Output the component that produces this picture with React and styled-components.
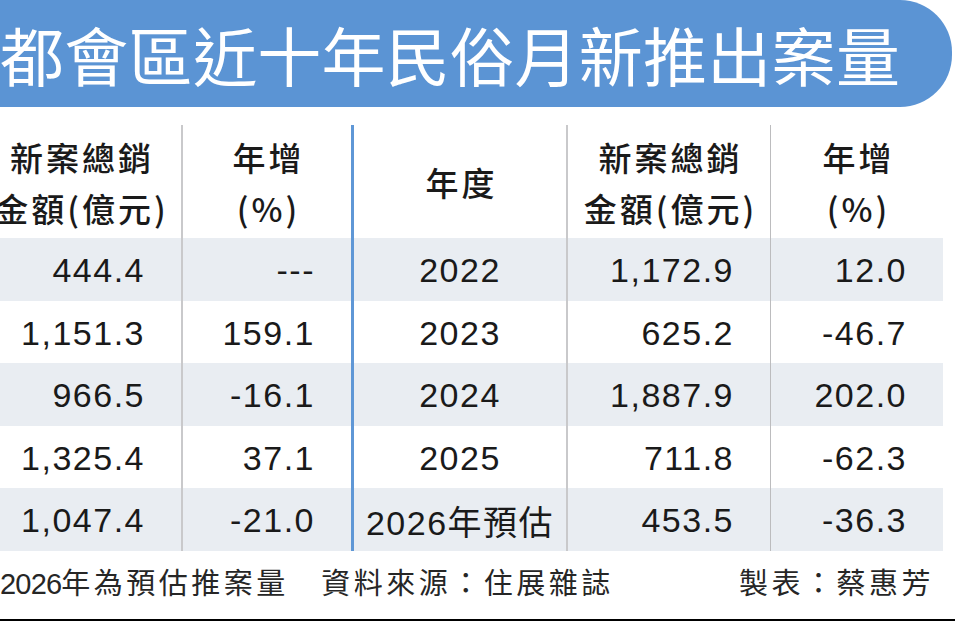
import React from "react";
import styled, { createGlobalStyle } from "styled-components";

const Global = createGlobalStyle`
  html, body { margin: 0; padding: 0; background: #fff; }
  body { font-family: "Liberation Sans", "Noto Sans CJK TC", sans-serif; color: #1f1f1f; }
`;

const Page = styled.div`
  width: 955px;
  height: 621px;
  overflow: hidden;
  display: flex;
  flex-direction: column;
  background: #fff;
`;

const TitleBar = styled.h1`
  margin: 0 3px 0 0;
  height: 107px;
  flex: none;
  background: #5b94d4;
  border-radius: 0 52px 52px 0;
  color: #fff;
  font: 400 64px/107px "Noto Sans CJK TC", sans-serif;
  letter-spacing: 0.3px;
  white-space: nowrap;
  overflow: hidden;
  padding-left: 0;
`;

const Table = styled.div`
  margin: 18px 0 0 -20px;
  display: flex;
  flex-direction: column;
  flex: none;
`;

const Row = styled.div`
  display: grid;
  grid-template-columns: 203px 171px 214px 203px 172px;
  width: 963px;
  height: ${(p) => (p.$head ? "113px" : "62.5px")};
  background: ${(p) => (p.$striped ? "#e9edf2" : "#fff")};
`;

const sepColor = {
  gray: "2px solid #c9c9cb",
  blue: "3px solid #5f97d6",
  thin: "1.5px solid #bcbcbe",
  none: "none",
};

const Cell = styled.div`
  box-sizing: border-box;
  display: flex;
  align-items: center;
  justify-content: ${(p) => (p.$center ? "center" : "flex-end")};
  padding-right: ${(p) => (p.$center ? "0" : "36px")};
  padding-top: 3px;
  border-right: ${(p) => sepColor[p.$sep || "none"]};
  font-size: 34px;
  letter-spacing: 1.5px;
  color: #1a1a1a;
  white-space: nowrap;
`;

const HeadCell = styled.div`
  box-sizing: border-box;
  display: flex;
  flex-direction: column;
  align-items: center;
  justify-content: center;
  text-align: center;
  border-right: ${(p) => sepColor[p.$sep || "none"]};
  font-family: "Noto Sans CJK TC", sans-serif;
  font-weight: 500;
  font-size: 33px;
  line-height: 51px;
  letter-spacing: 3px;
  padding-left: 3px;
  padding-top: 2px;
  color: #1a1a1a;
  white-space: nowrap;
`;

const Footer = styled.div`
  height: 60px;
  flex: none;
  display: flex;
  align-items: center;
  justify-content: space-between;
  padding: 0 21px 0 0;
  font-family: "Noto Sans CJK TC", sans-serif;
  font-size: 29px;
  letter-spacing: 3.5px;
  color: #262626;
  white-space: nowrap;
`;

const FootNum = styled.span`
  font-family: "Liberation Sans", sans-serif;
  font-size: 29px;
  letter-spacing: -0.8px;
`;

const Spacer = styled.div`
  flex: 1;
`;

const BottomRule = styled.div`
  height: 2px;
  flex: none;
  background: #000;
`;

const rows = [
  ["444.4", "---", "2022", "1,172.9", "12.0"],
  ["1,151.3", "159.1", "2023", "625.2", "-46.7"],
  ["966.5", "-16.1", "2024", "1,887.9", "202.0"],
  ["1,325.4", "37.1", "2025", "711.8", "-62.3"],
  ["1,047.4", "-21.0", "2026年預估", "453.5", "-36.3"],
];

export default function App() {
  return (
    <>
      <Global />
      <Page>
        <TitleBar>都會區近十年民俗月新推出案量</TitleBar>
        <Table>
          <Row $head>
            <HeadCell $sep="gray">
              <span>新案總銷</span>
              <span>金額(億元)</span>
            </HeadCell>
            <HeadCell $sep="blue">
              <span>年增</span>
              <span>(%)</span>
            </HeadCell>
            <HeadCell $sep="gray">
              <span>年度</span>
            </HeadCell>
            <HeadCell $sep="thin">
              <span>新案總銷</span>
              <span>金額(億元)</span>
            </HeadCell>
            <HeadCell>
              <span>年增</span>
              <span>(%)</span>
            </HeadCell>
          </Row>
          {rows.map((r, i) => (
            <Row key={r[2]} $striped={i % 2 === 0}>
              <Cell $sep="gray">{r[0]}</Cell>
              <Cell $sep="blue">{r[1]}</Cell>
              <Cell $sep="gray" $center>{r[2]}</Cell>
              <Cell $sep="thin">{r[3]}</Cell>
              <Cell>{r[4]}</Cell>
            </Row>
          ))}
        </Table>
        <Footer>
          <span>
            <FootNum>2026</FootNum>年為預估推案量　資料來源：住展雜誌
          </span>
          <span>製表：蔡惠芳</span>
        </Footer>
        <Spacer />
        <BottomRule />
      </Page>
    </>
  );
}
